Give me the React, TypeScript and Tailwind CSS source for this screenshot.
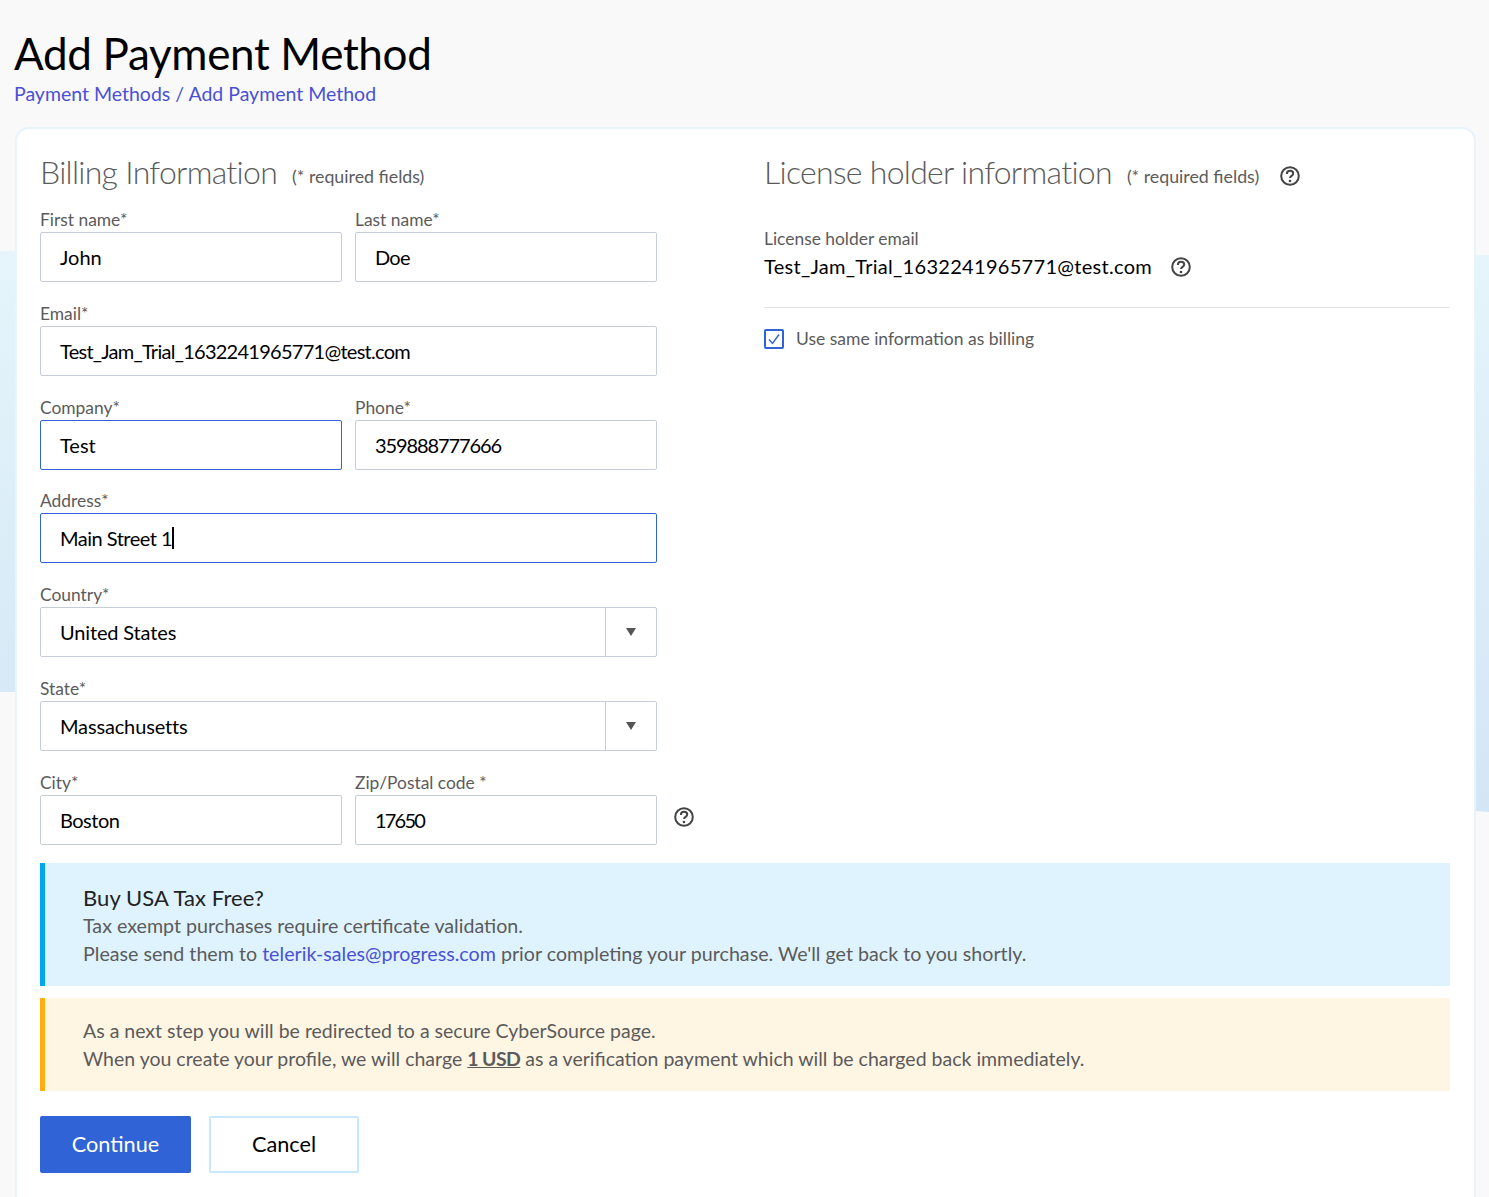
import React from 'react';

const font = "font-['Lato','Noto_Sans',sans-serif]";

const HelpIcon = ({ className = '' }: { className?: string }) => (
  <svg viewBox="0 0 20 20" className={`w-5 h-5 shrink-0 text-[#444] ${className}`} fill="none" stroke="currentColor">
    <circle cx="10" cy="10" r="8.8" strokeWidth="2" />
    <path d="M6.9 7.9c0-1.9 1.3-3.1 3.2-3.1 1.8 0 3.1 1.1 3.1 2.7 0 2.4-3.2 2.3-3.2 4.6" strokeWidth="2" />
    <circle cx="10" cy="15" r="1.3" fill="currentColor" stroke="none" />
  </svg>
);

const Field = ({
  label,
  value,
  focused,
  caret,
  valueClass = '',
  className = '',
}: {
  label: string;
  value: string;
  focused?: boolean;
  caret?: boolean;
  valueClass?: string;
  className?: string;
}) => (
  <div className={className}>
    <div className="h-[18px] text-[17.4px] leading-[18px] text-[#5b5b5b]">{label}</div>
    <div
      className={`h-[50px] mt-[3px] flex items-center px-[19px] bg-white border rounded-[2px] text-[20px] text-black ${
        focused ? 'border-[#2f63d6]' : 'border-[#c5ced8]'
      }`}
    >
      <span className={`pb-[1px] ${valueClass}`}>{value}</span>
      {caret && <span className="w-[1.5px] h-[22px] bg-black" />}
    </div>
  </div>
);

const SelectField = ({ label, value }: { label: string; value: string }) => (
  <div>
    <div className="h-[18px] text-[17.4px] leading-[18px] text-[#5b5b5b]">{label}</div>
    <div className="h-[50px] mt-[3px] flex items-center bg-white border border-[#c5ced8] rounded-[2px] text-[20px] text-black">
      <span className="flex-1 px-[19px] pb-[1px] tracking-[-0.15px]">{value}</span>
      <span className="w-[51px] h-full flex items-center justify-center border-l border-[#c5ced8]">
        <span className="w-0 h-0 border-x-[5px] border-x-transparent border-t-[8px] border-t-[#555]" />
      </span>
    </div>
  </div>
);

export default function App() {
  return (
    <div className={`relative w-[1489px] h-[1197px] overflow-hidden bg-[#f9f9f9] ${font}`}>
      {/* Background band behind the card */}
      <svg className="absolute inset-0 w-full h-full" viewBox="0 0 1489 1197" preserveAspectRatio="none">
        <defs>
          <linearGradient id="band" x1="0" y1="0" x2="0" y2="1">
            <stop offset="0" stopColor="#e5f5fb" />
            <stop offset="1" stopColor="#d3e6f5" />
          </linearGradient>
        </defs>
        <path d="M0 251 C500 240 1000 262 1489 255 L1489 812 C1000 780 500 690 0 692 Z" fill="url(#band)" />
      </svg>

      <div className="relative pl-[14px] pt-[27px]">
        <h1 className="text-[44px] leading-[52px] tracking-[-0.33px] text-black">Add Payment Method</h1>
        <div className="mt-[2px] text-[19.5px] leading-[26px] text-[#4a50d6]">Payment Methods / Add Payment Method</div>

        <div className="mt-[20px] ml-px w-[1461px] h-[1100px] bg-white border-2 border-[#e8f4fb] rounded-[14px] pl-[23px] pr-[24px] pt-[22px]">
          <div className="flex">
            {/* Billing column */}
            <div className="w-[617px]">
              <div className="flex items-baseline h-[42px]">
                <h2 className="text-[32px] leading-[42px] tracking-[-0.7px] font-light text-[#5b5b5b]">Billing Information</h2>
                <span className="ml-[15px] -translate-y-px text-[17.8px] text-[#5b5b5b]">(* required fields)</span>
              </div>
              <div className="mt-[18px] flex flex-col gap-[23px]">
                <div className="grid grid-cols-[302px_302px] gap-x-[13px]">
                  <Field label="First name*" value="John" />
                  <Field label="Last name*" value="Doe" valueClass="tracking-[-0.7px]" />
                </div>
                <Field label="Email*" value="Test_Jam_Trial_1632241965771@test.com" valueClass="tracking-[-0.73px]" />
                <div className="grid grid-cols-[302px_302px] gap-x-[13px]">
                  <Field label="Company*" value="Test" focused />
                  <Field label="Phone*" value="359888777666" valueClass="tracking-[-1.1px]" />
                </div>
                <Field
                  label="Address*"
                  value="Main Street 1"
                  focused
                  caret
                  valueClass="tracking-[-0.5px]"
                  className="-mt-px"
                />
                <SelectField label="Country*" value="United States" />
                <SelectField label="State*" value="Massachusetts" />
                <div className="relative grid grid-cols-[302px_302px] gap-x-[13px]">
                  <Field label="City*" value="Boston" valueClass="tracking-[-0.5px]" />
                  <Field label="Zip/Postal code *" value="17650" valueClass="tracking-[-1.8px]" />
                  <HelpIcon className="absolute left-[634px] top-[33px]" />
                </div>
              </div>
            </div>

            {/* License holder column */}
            <div className="ml-[107px] flex-1">
              <div className="flex items-baseline h-[42px]">
                <h2 className="text-[32px] leading-[42px] tracking-[-0.7px] font-light text-[#5b5b5b]">
                  License holder information
                </h2>
                <span className="ml-[15px] -translate-y-px text-[17.8px] text-[#5b5b5b]">(* required fields)</span>
                <HelpIcon className="ml-[21px] self-center mt-[8px]" />
              </div>
              <div className="mt-[36px] text-[17.4px] leading-[20px] text-[#5b5b5b]">License holder email</div>
              <div className="mt-[4px] flex items-center text-[20px] leading-[26px] tracking-[0.3px] text-black">
                Test_Jam_Trial_1632241965771@test.com
                <HelpIcon className="ml-[19px] mt-[1px]" />
              </div>
              <div className="mt-[28px] border-t border-[#e4e4e4]" />
              <label className="mt-[18px] flex items-center gap-[12px] text-[17.5px] text-[#5b5b5b]">
                <span className="w-5 h-5 flex items-center justify-center border-2 border-[#2f63d6] rounded-[2px]">
                  <svg viewBox="0 0 16 16" className="w-4 h-4" fill="none" stroke="#2f63d6" strokeWidth="1.4">
                    <path d="M3 8.5l3.5 4L13 3.5" />
                  </svg>
                </span>
                Use same information as billing
              </label>
            </div>
          </div>

          {/* Notices */}
          <div className="mt-[18px] h-[123px] bg-[#def3fe] border-l-[5px] border-[#00a6f0] pl-[38px] pt-[20px] text-[19.66px] leading-[28px] text-[#5b5b5b]">
            <div className="text-[22px] leading-[29px] tracking-[0.1px] text-[#222]">Buy USA Tax Free?</div>
            <div>Tax exempt purchases require certificate validation.</div>
            <div>
              Please send them to <span className="text-[#4a50d6]">telerik-sales@progress.com</span> prior completing your
              purchase. We'll get back to you shortly.
            </div>
          </div>
          <div className="mt-[12px] h-[93px] bg-[#fff5e3] border-l-[5px] border-[#ffae0f] pl-[38px] pt-[19px] text-[19.5px] leading-[28px] text-[#5b5b5b]">
            <div>As a next step you will be redirected to a secure CyberSource page.</div>
            <div>
              When you create your profile, we will charge{' '}
              <span className="font-bold underline tracking-[-0.6px]">1 USD</span> as a verification payment which will be
              charged back immediately.
            </div>
          </div>

          {/* Actions */}
          <div className="mt-[25px] flex gap-[18px]">
            <button className="w-[151px] h-[57px] pb-[1px] bg-[#2f63d6] rounded-[2px] text-[21.7px] text-white">Continue</button>
            <button className="w-[150px] h-[57px] pb-[1px] bg-white border-2 border-[#c8e8fc] rounded-[2px] text-[21.7px] text-black">
              Cancel
            </button>
          </div>
        </div>
      </div>
    </div>
  );
}
